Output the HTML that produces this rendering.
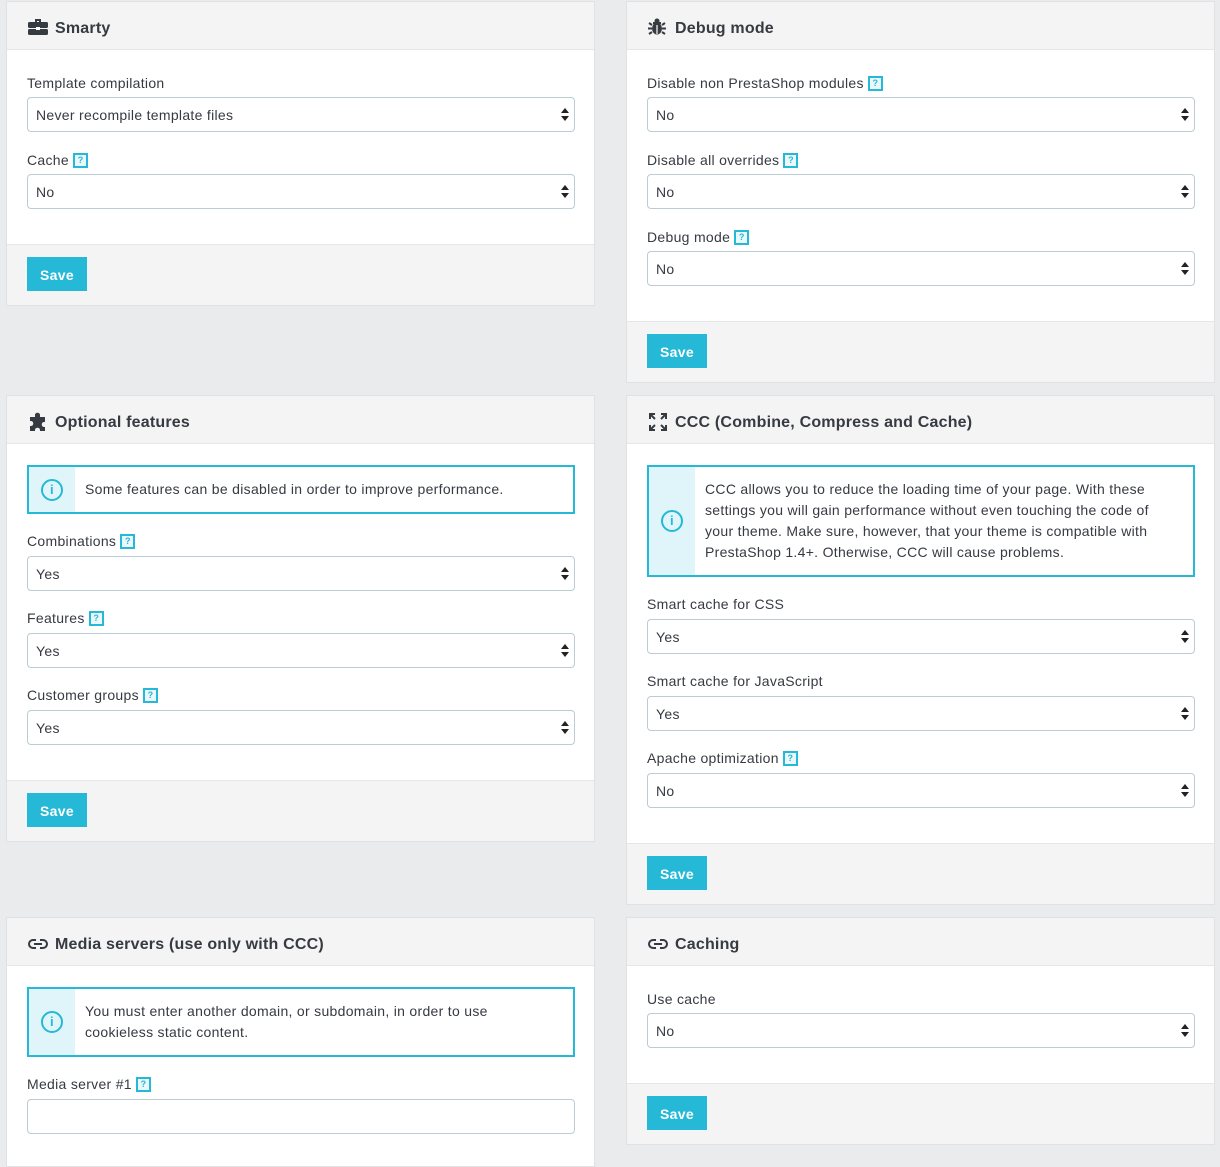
<!DOCTYPE html>
<html><head><meta charset="utf-8">
<style>
*{box-sizing:border-box;margin:0;padding:0}
body{width:1220px;height:1152px;background:#eaebed;font-family:"Liberation Sans",sans-serif;font-size:14px;color:#363a41;position:relative;overflow:hidden;letter-spacing:0.3px}
.p{position:absolute;width:589px;background:#fff;border:1px solid #dfe2e5}
.h{position:absolute;left:0;right:0;top:0;height:48px;background:#f4f4f4;border-bottom:1px solid #e4e6e8;padding-left:48px;padding-top:3px;line-height:48px;font-weight:bold;font-size:16px;color:#363a41;letter-spacing:0.2px}
.h svg{position:absolute;left:21px;top:16px}
.f{position:absolute;left:0;right:0;bottom:0;background:#f4f4f4;border-top:1px solid #e4e6e8}
.btn{position:absolute;left:20px;width:60px;height:34px;background:#25b9d7;color:#fff;font-weight:bold;font-size:14px;line-height:36px;text-align:center}
.l{position:absolute;left:20px;line-height:18px;font-size:14px;color:#363a41}
.q{display:inline-block;width:15px;height:15px;border:2px solid #25b9d7;color:#25b9d7;font-size:9px;line-height:11px;text-align:center;font-weight:bold;position:relative;top:-1px;vertical-align:middle;margin-left:4px;background:#eaf8fb;letter-spacing:0}
.s{position:absolute;left:20px;width:548px;height:35px;border:1px solid #bbcdd2;border-radius:4px;padding-left:8px;line-height:35px;color:#363a41}
.s:after{content:"";position:absolute;right:5px;top:10px;border:4px solid transparent;border-bottom:5px solid #222;border-top:0}
.s:before{content:"";position:absolute;right:5px;top:18px;border:4px solid transparent;border-top:5px solid #222;border-bottom:0}
.i:after,.i:before{display:none}
.a{position:absolute;left:20px;width:548px;border:2px solid #25b9d7;background:#fff;padding-left:56px;padding-right:24px;display:flex;align-items:center;line-height:21px}
.a .ic{position:absolute;left:0;top:0;bottom:0;width:46px;background:#dff5f9}
.a .ic:after{content:"i";position:absolute;left:12px;top:50%;margin-top:-11px;width:22px;height:22px;border:2px solid #25b9d7;border-radius:50%;color:#25b9d7;font-size:13px;line-height:18px;text-align:center;font-weight:bold;box-sizing:border-box}
</style></head><body>

<!-- Smarty -->
<div class="p" style="left:6px;top:1px;height:305px">
<div class="h"><svg width="20" height="18" viewBox="0 0 20 18"><path d="M7 1h6v3h-2V3H9v1H7z" fill="#363a41"/><rect x="0" y="4" width="20" height="6" rx="1.5" fill="#363a41"/><rect x="0" y="11" width="20" height="6" rx="1.5" fill="#363a41"/><rect x="8" y="9" width="4" height="3" fill="#fff"/></svg>Smarty</div>
<div class="l" style="top:72px">Template compilation</div>
<div class="s" style="top:95px">Never recompile template files</div>
<div class="l" style="top:149px">Cache<span class="q">?</span></div>
<div class="s" style="top:172px">No</div>
<div class="f" style="height:61px"><div class="btn" style="top:12px">Save</div></div>
</div>

<!-- Debug -->
<div class="p" style="left:626px;top:1px;height:382px">
<div class="h"><svg width="18" height="18" viewBox="0 0 18 18"><ellipse cx="9" cy="10.5" rx="5" ry="6" fill="#363a41"/><path d="M5 4h8v2H5z" fill="#363a41"/><circle cx="9" cy="3" r="2.5" fill="#363a41"/><path d="M1 5l3 2M17 5l-3 2M0 10.5h4M14 10.5h4M1 16l3-2M17 16l-3-2" stroke="#363a41" stroke-width="2"/><path d="M9 7v9" stroke="#fff" stroke-width="1.2"/></svg>Debug mode</div>
<div class="l" style="top:72px">Disable non PrestaShop modules<span class="q">?</span></div>
<div class="s" style="top:95px">No</div>
<div class="l" style="top:149px">Disable all overrides<span class="q">?</span></div>
<div class="s" style="top:172px">No</div>
<div class="l" style="top:226px">Debug mode<span class="q">?</span></div>
<div class="s" style="top:249px">No</div>
<div class="f" style="height:61px"><div class="btn" style="top:12px">Save</div></div>
</div>

<!-- Optional features -->
<div class="p" style="left:6px;top:395px;height:447px">
<div class="h"><svg width="20" height="20" viewBox="0 0 20 20"><path d="M7 3c0-3 5-3 5 0v2h5v5h-1c-3 0-3 5 0 5h1v4H12v-1c0-3-5-3-5 0v1H2v-5h1c3 0 3-5 0-5H2V5h5z" fill="#363a41"/></svg>Optional features</div>
<div class="a" style="top:69px;height:49px"><div class="ic"></div>Some features can be disabled in order to improve performance.</div>
<div class="l" style="top:136px">Combinations<span class="q">?</span></div>
<div class="s" style="top:160px">Yes</div>
<div class="l" style="top:213px">Features<span class="q">?</span></div>
<div class="s" style="top:237px">Yes</div>
<div class="l" style="top:290px">Customer groups<span class="q">?</span></div>
<div class="s" style="top:314px">Yes</div>
<div class="f" style="height:61px"><div class="btn" style="top:12px">Save</div></div>
</div>

<!-- CCC -->
<div class="p" style="left:626px;top:395px;height:510px">
<div class="h"><svg width="20" height="20" viewBox="0 0 20 20" fill="none" stroke="#363a41" stroke-width="2"><path d="M2 7V2h5M2 2l5 5M18 7V2h-5M18 2l-5 5M2 13v5h5M2 18l5-5M18 13v5h-5M18 18l-5-5"/></svg>CCC (Combine, Compress and Cache)</div>
<div class="a" style="top:69px;height:112px;padding-right:30px"><div class="ic"></div>CCC allows you to reduce the loading time of your page. With these settings you will gain performance without even touching the code of your theme. Make sure, however, that your theme is compatible with PrestaShop 1.4+. Otherwise, CCC will cause problems.</div>
<div class="l" style="top:199px">Smart cache for CSS</div>
<div class="s" style="top:223px">Yes</div>
<div class="l" style="top:276px">Smart cache for JavaScript</div>
<div class="s" style="top:300px">Yes</div>
<div class="l" style="top:353px">Apache optimization<span class="q">?</span></div>
<div class="s" style="top:377px">No</div>
<div class="f" style="height:61px"><div class="btn" style="top:12px">Save</div></div>
</div>

<!-- Media servers -->
<div class="p" style="left:6px;top:917px;height:250px">
<div class="h"><svg width="20" height="20" viewBox="0 0 20 20" fill="none" stroke="#363a41" stroke-width="2"><path d="M8 6H5a4 4 0 0 0 0 8h3M12 6h3a4 4 0 0 1 0 8h-3M6 10h8"/></svg>Media servers (use only with CCC)</div>
<div class="a" style="top:69px;height:70px;padding-right:60px"><div class="ic"></div>You must enter another domain, or subdomain, in order to use cookieless static content.</div>
<div class="l" style="top:157px">Media server #1<span class="q">?</span></div>
<div class="s i" style="top:181px"></div>
</div>

<!-- Caching -->
<div class="p" style="left:626px;top:917px;height:228px">
<div class="h"><svg width="20" height="20" viewBox="0 0 20 20" fill="none" stroke="#363a41" stroke-width="2"><path d="M8 6H5a4 4 0 0 0 0 8h3M12 6h3a4 4 0 0 1 0 8h-3M6 10h8"/></svg>Caching</div>
<div class="l" style="top:72px">Use cache</div>
<div class="s" style="top:95px">No</div>
<div class="f" style="height:61px"><div class="btn" style="top:12px">Save</div></div>
</div>

</body></html>
